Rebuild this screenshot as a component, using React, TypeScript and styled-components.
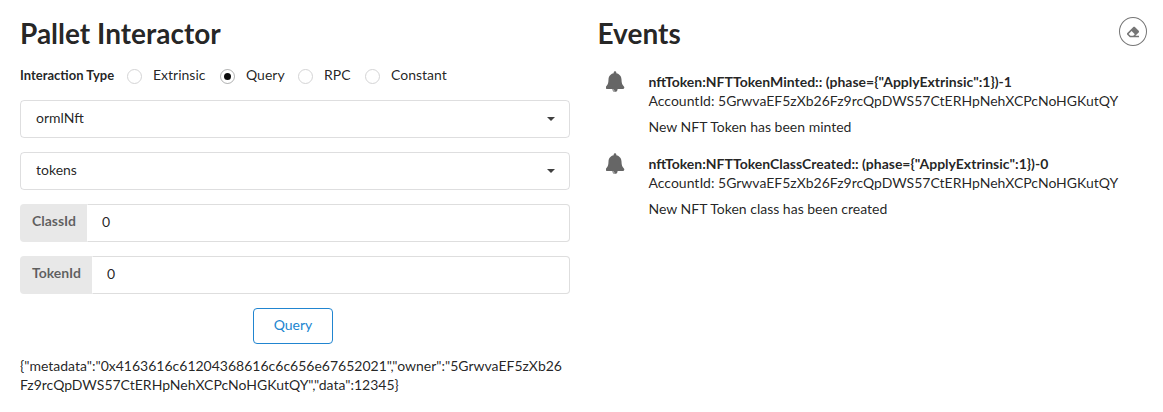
import React from "react";
import styled, { createGlobalStyle } from "styled-components";

const Global = createGlobalStyle`
  *, *::before, *::after { box-sizing: border-box; }
  html { font-size: 14px; }
  body {
    margin: 0;
    background: #fff;
    color: rgba(0, 0, 0, 0.87);
    font-family: Lato, "Liberation Sans", sans-serif;
    font-size: 14px;
    line-height: 1.4285em;
    overflow: hidden;
  }
`;

const Page = styled.main`
  display: grid;
  grid-template-columns: 550px 549.5px;
  column-gap: 27.5px;
  padding: 14px 0 0 20px;
`;

const Column = styled.section`
  min-width: 0;
`;

const Title = styled.h1`
  margin: 0;
  padding: 1px 0;
  font-size: 28px;
  line-height: 36px;
  font-weight: 700;
`;

const RadioRow = styled.div`
  display: flex;
  align-items: flex-start;
  height: 20px;
  margin: 13px 0 15px;
`;

const RadioHeading = styled.span`
  width: 107px;
  font-size: 13px;
  font-weight: 700;
  white-space: nowrap;
`;

const RadioLabel = styled.label<{ $width: number }>`
  display: flex;
  align-items: flex-start;
  gap: 11px;
  width: ${(p) => p.$width}px;
  white-space: nowrap;
`;

const RadioDot = styled.span<{ $checked?: boolean }>`
  display: grid;
  place-items: center;
  flex: none;
  width: 15px;
  height: 15px;
  margin-top: 4px;
  border: 1px solid ${(p) => (p.$checked ? "rgba(34,36,38,.35)" : "#d4d4d5")};
  border-radius: 50%;

  &::after {
    content: "";
    width: 7px;
    height: 7px;
    border-radius: 50%;
    background: ${(p) => (p.$checked ? "rgba(0,0,0,.95)" : "transparent")};
  }
`;

const Select = styled.div`
  display: flex;
  align-items: center;
  justify-content: space-between;
  height: 38px;
  margin-bottom: 14px;
  padding: 0 14px 2px 15px;
  border: 1px solid rgba(34, 36, 38, 0.15);
  border-radius: 4px;
`;

const Caret = styled.span`
  margin-top: 2px;
  border: 4px solid transparent;
  border-top-color: rgba(0, 0, 0, 0.75);
  border-bottom: 0;
`;

const Field = styled.div`
  display: flex;
  height: 38px;
  margin-bottom: 14px;
`;

const FieldLabel = styled.span`
  padding: 7px 11px 9px 12px;
  border-radius: 4px 0 0 4px;
  background: #e8e8e8;
  color: rgba(0, 0, 0, 0.6);
  font-weight: 700;
`;

const FieldInput = styled.input`
  flex: 1;
  min-width: 0;
  padding: 0 14px 2px;
  border: 1px solid rgba(34, 36, 38, 0.15);
  border-left-color: transparent;
  border-radius: 0 4px 4px 0;
  color: inherit;
  font: inherit;
  outline: 0;
`;

const QueryButton = styled.button`
  display: block;
  width: 80px;
  height: 36px;
  margin: 0 0 0 233px;
  padding: 0 0 2px;
  border: 1px solid #2185d0;
  border-radius: 4px;
  background: #fff;
  color: #2185d0;
  font: inherit;
`;

const Result = styled.p`
  width: 546px;
  margin: 12px 0 0;
  line-height: 19px;
  overflow-wrap: break-word;
  word-break: break-all;
`;

const EventsHeader = styled.header`
  display: flex;
  justify-content: space-between;
  align-items: flex-start;
`;

const ClearButton = styled.button`
  display: grid;
  place-items: center;
  width: 28px;
  height: 29px;
  margin-top: 3px;
  padding: 0;
  border: 1px solid #767676;
  border-radius: 50%;
  background: #fff;
  color: #767676;
`;

const Feed = styled.div`
  padding-top: 18px;
`;

const Event = styled.article`
  display: flex;
  height: 82px;
`;

const EventIcon = styled.svg`
  flex: none;
  width: 19px;
  height: 22px;
  margin: 1px 24px 0 8px;
  fill: #666;
`;

const EventBody = styled.div`
  padding-top: 2px;
  line-height: 19px;
  white-space: nowrap;
`;

const Summary = styled.div`
  font-weight: 700;
`;

const Extra = styled.div`
  margin-top: 7px;
`;

const types = [
  { name: "Extrinsic", width: 93 },
  { name: "Query", width: 78, checked: true },
  { name: "RPC", width: 67 },
  { name: "Constant", width: 90 },
];

const account = "5GrwvaEF5zXb26Fz9rcQpDWS57CtERHpNehXCPcNoHGKutQY";
const events = [
  { summary: 'nftToken:NFTTokenMinted:: (phase={"ApplyExtrinsic":1})-1', text: "New NFT Token has been minted" },
  { summary: 'nftToken:NFTTokenClassCreated:: (phase={"ApplyExtrinsic":1})-0', text: "New NFT Token class has been created" },
];

const Bell = () => (
  <EventIcon viewBox="0.2 -0.2 19 22">
    <path d="M9.2 0c.8 0 1.3.6 1.3 1.3v.7c3.1.6 5.2 3.2 5.2 6.300 0 4 1 5.600 2.400 6.900.9 1 .3 2.700-1.200 2.700H1.500c-1.500 0-2.100-1.700-1.200-2.700C1.700 13.900 2.700 12.300 2.700 8.300c0-3.100 2.100-5.700 5.200-6.300v-.7C7.900.6 8.400 0 9.200 0z" />
    <path d="M6.600 17.900h5.200c0 1.700-1.100 3-2.600 3s-2.600-1.300-2.600-3zm.9.500c0 1 .8 1.800 1.700 1.800.4 0 .4-.5 0-.5-.7 0-1.200-.6-1.200-1.300 0-.4-.5-.4-.5 0z" fillRule="evenodd" />
  </EventIcon>
);

const Eraser = () => (
  <svg width="12" height="12" viewBox="0 0 512 512" fill="currentColor">
    <path d="M497.941 273.941c18.745-18.745 18.745-49.137 0-67.882l-160-160c-18.745-18.745-49.136-18.746-67.883 0l-256 256c-18.745 18.745-18.745 49.137 0 67.882l96 96A48.004 48.004 0 0 0 144 480h356c6.627 0 12-5.373 12-12v-40c0-6.627-5.373-12-12-12H355.883l142.058-142.059zm-302.627-62.627l137.373 137.373L265.373 416H150.628l-80-80 124.686-124.686z" />
  </svg>
);

export default function App() {
  return (
    <>
      <Global />
      <Page>
        <Column>
          <Title>Pallet Interactor</Title>
          <RadioRow>
            <RadioHeading>Interaction Type</RadioHeading>
            {types.map((t) => (
              <RadioLabel key={t.name} $width={t.width}>
                <RadioDot $checked={t.checked} />
                {t.name}
              </RadioLabel>
            ))}
          </RadioRow>
          <Select>ormlNft<Caret /></Select>
          <Select>tokens<Caret /></Select>
          <Field>
            <FieldLabel>ClassId</FieldLabel>
            <FieldInput defaultValue="0" />
          </Field>
          <Field>
            <FieldLabel>TokenId</FieldLabel>
            <FieldInput defaultValue="0" />
          </Field>
          <QueryButton>Query</QueryButton>
          <Result>
            {`{"metadata":"0x4163616c61204368616c6c656e67652021","owner":"${account}","data":12345}`}
          </Result>
        </Column>
        <Column>
          <EventsHeader>
            <Title>Events</Title>
            <ClearButton aria-label="Clear events"><Eraser /></ClearButton>
          </EventsHeader>
          <Feed>
            {events.map((e) => (
              <Event key={e.summary}>
                <Bell />
                <EventBody>
                  <Summary>{e.summary}</Summary>
                  <div>AccountId: {account}</div>
                  <Extra>{e.text}</Extra>
                </EventBody>
              </Event>
            ))}
          </Feed>
        </Column>
      </Page>
    </>
  );
}
